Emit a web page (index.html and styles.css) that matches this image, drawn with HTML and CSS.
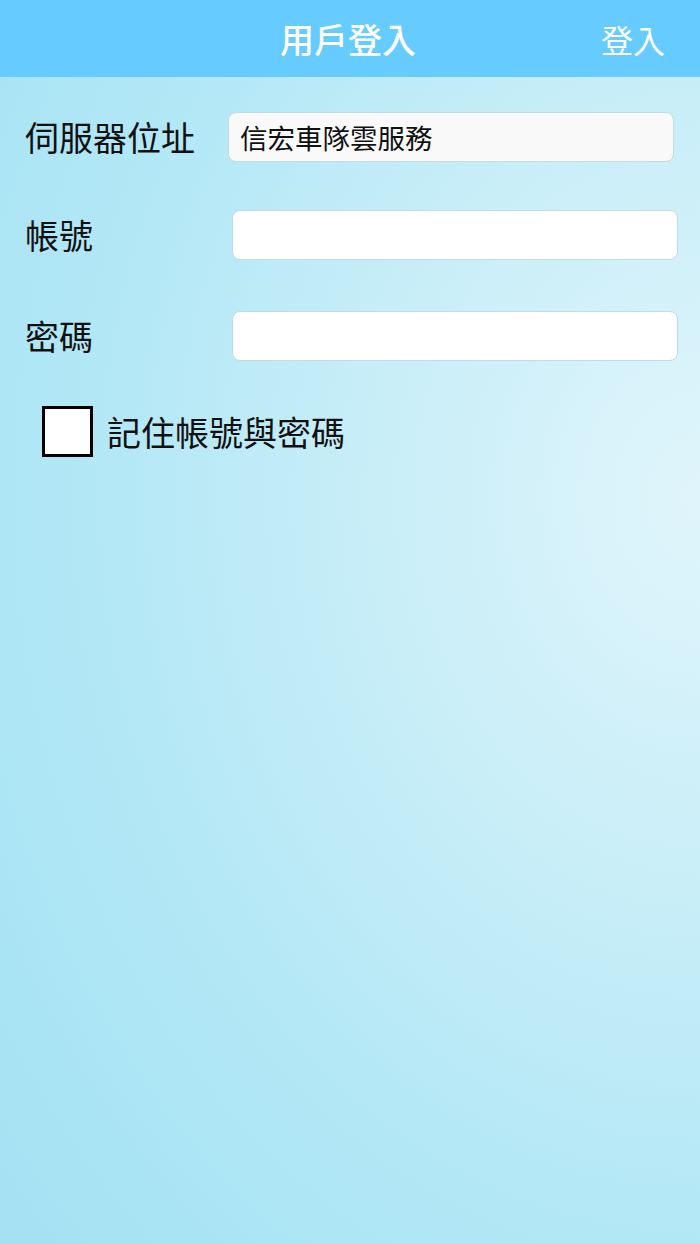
FILE: index.html
```html
<!DOCTYPE html>
<html lang="zh-Hant">
<head>
<meta charset="utf-8">
<link rel="stylesheet" href="styles.css">
</head>
<body>
<div class="page">
  <header class="nav">
    <div class="nav-title">用戶登入</div>
    <div class="nav-action">登入</div>
  </header>
  <main class="form">
    <div class="row row-server">
      <div class="label">伺服器位址</div>
      <div class="field field-server">信宏車隊雲服務</div>
    </div>
    <div class="row row-account">
      <div class="label">帳號</div>
      <div class="field field-blank"></div>
    </div>
    <div class="row row-password">
      <div class="label">密碼</div>
      <div class="field field-blank"></div>
    </div>
    <div class="remember">
      <div class="checkbox"></div>
      <div class="remember-text">記住帳號與密碼</div>
    </div>
  </main>
</div>
</body>
</html>
```
FILE: styles.css
```css
html, body {
  margin: 0;
  padding: 0;
}
body {
  width: 700px;
  height: 1244px;
  overflow: hidden;
  font-family: "Noto Sans CJK TC", "Noto Sans", sans-serif;
}
.page {
  width: 700px;
  height: 1244px;
  display: flex;
  flex-direction: column;
  background:
    radial-gradient(ellipse 900px 1100px at 100% 40%, #e0f5fb 0%, #c9eef8 35%, #b4e8f6 65%, #a4e2f3 100%);
}
.nav {
  height: 77px;
  background: #66ccff;
  display: flex;
  align-items: center;
  justify-content: center;
  position: relative;
  flex-shrink: 0;
}
.nav-title {
  color: #fff;
  font-size: 34px;
  font-weight: 500;
  margin-left: -4px;
}
.nav-action {
  position: absolute;
  right: 35px;
  top: 50%;
  transform: translateY(-50%);
  color: #fff;
  font-size: 32px;
  font-weight: 400;
}
.form {
  display: flex;
  flex-direction: column;
  padding-left: 25px;
}
.row {
  display: flex;
  align-items: center;
  height: 50px;
}
.row-server { margin-top: 35px; }
.row-account { margin-top: 48px; }
.row-password { margin-top: 51px; }
.label {
  font-size: 34px;
  color: #111;
  line-height: 50px;
}
.row-server .label { width: 203px; }
.row-account .label, .row-password .label { width: 207px; }
.field {
  height: 48px;
  width: 444px;
  border: 1px solid #c3dbe3;
  border-radius: 8px;
  box-sizing: content-box;
  display: flex;
  align-items: center;
}
.field-server {
  background: #f9f9f9;
  font-size: 27.5px;
  color: #111;
  padding-left: 11px;
  width: 433px;
}
.field-blank {
  background: #fff;
}
.remember {
  display: flex;
  align-items: center;
  margin-top: 45px;
  margin-left: 17px;
}
.checkbox {
  width: 45px;
  height: 45px;
  border: 3px solid #000;
  background: #fff;
  flex-shrink: 0;
}
.remember-text {
  margin-left: 14px;
  font-size: 34px;
  color: #111;
}
```
